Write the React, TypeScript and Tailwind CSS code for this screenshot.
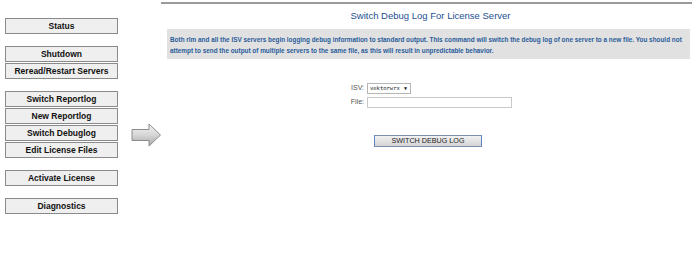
import React from "react";

const groups: string[][] = [
  ["Status"],
  ["Shutdown", "Reread/Restart Servers"],
  ["Switch Reportlog", "New Reportlog", "Switch Debuglog", "Edit License Files"],
  ["Activate License"],
  ["Diagnostics"],
];

function SideButton({ label }: { label: string }) {
  return (
    <div className="h-[16px] w-[113px] border border-[#8a8a8a] bg-[#efefef] flex items-center justify-center text-[8.5px] font-bold text-[#111] leading-none">
      {label}
    </div>
  );
}

function Arrow() {
  return (
    <svg width="31" height="24" viewBox="0 0 31 24">
      <defs>
        <linearGradient id="ag" x1="0" y1="0" x2="0" y2="1">
          <stop offset="0" stopColor="#f4f4f4" />
          <stop offset="0.5" stopColor="#d6d6d6" />
          <stop offset="1" stopColor="#a8a8a8" />
        </linearGradient>
      </defs>
      <path
        d="M1 6.5 H18 V1 L29.5 12 L18 23 V17.5 H1 Z"
        fill="url(#ag)"
        stroke="#8c8c8c"
        strokeWidth="1"
      />
    </svg>
  );
}

export default function App() {
  const font = { fontFamily: '"Liberation Sans", Arial, sans-serif' };
  return (
    <div className="w-[692px] h-[257px] bg-white flex" style={font}>
      <div className="pl-[5px] pt-[18px] flex flex-col gap-[12px]">
        {groups.map((g, i) => (
          <div key={i} className="flex flex-col gap-[1px]">
            {g.map((l) => (
              <SideButton key={l} label={l} />
            ))}
          </div>
        ))}
      </div>
      <div className="pl-[13px] pt-[123px] w-[43px]">
        <Arrow />
      </div>
      <div className="flex-1 pt-[2px]">
        <div className="border-t-2 border-[#9a9a9a]" />
        <div className="text-center text-[9.5px] text-[#1d4f91] pt-[5px] leading-[13px] pl-[8px]">
          Switch Debug Log For License Server
        </div>
        <div className="mt-[7px] ml-[6px] mr-[2px] h-[30px] bg-[#e1e1e1] px-[3px] pt-[5px] text-[6.4px] leading-[11px] font-bold text-[#2a5c9a] whitespace-nowrap overflow-hidden">
          <p>
            Both rlm and all the ISV servers begin logging debug information to standard output. This command will switch the debug log of one server to a new file. You should not
          </p>
          <p>
            attempt to send the output of multiple servers to the same file, as this will result in unpredictable behavior.
          </p>
        </div>
        <div className="mt-[24px] pl-[186px] flex flex-col gap-[3px] text-[7px] text-[#555]">
          <div className="flex items-center h-[11px]">
            <span className="w-[20px] text-right pr-[3px]">ISV:</span>
            <div className="h-[11px] w-[44px] border border-[#b5b5b5] bg-white flex items-center justify-between pl-[2px] pr-[3px] text-[5.5px] text-[#222]" style={{ fontFamily: '"DejaVu Sans Mono", monospace' }}>
              <span>vektorwrx</span>
              <span className="text-[5px]">▼</span>
            </div>
          </div>
          <div className="flex items-center h-[11px]">
            <span className="w-[20px] text-right pr-[3px]">File:</span>
            <div className="h-[11px] w-[145px] border border-[#c8c8c8] bg-white" />
          </div>
        </div>
        <div className="mt-[27px] pl-[213px]">
          <div className="w-[108px] h-[12px] border border-[#7a8fb0] border-l-[#5f86c2] border-r-[#5f86c2] bg-gradient-to-b from-[#f2f2f2] to-[#d4d4d4] flex items-center justify-center text-[7.2px] text-[#222] leading-none">
            SWITCH DEBUG LOG
          </div>
        </div>
      </div>
    </div>
  );
}
